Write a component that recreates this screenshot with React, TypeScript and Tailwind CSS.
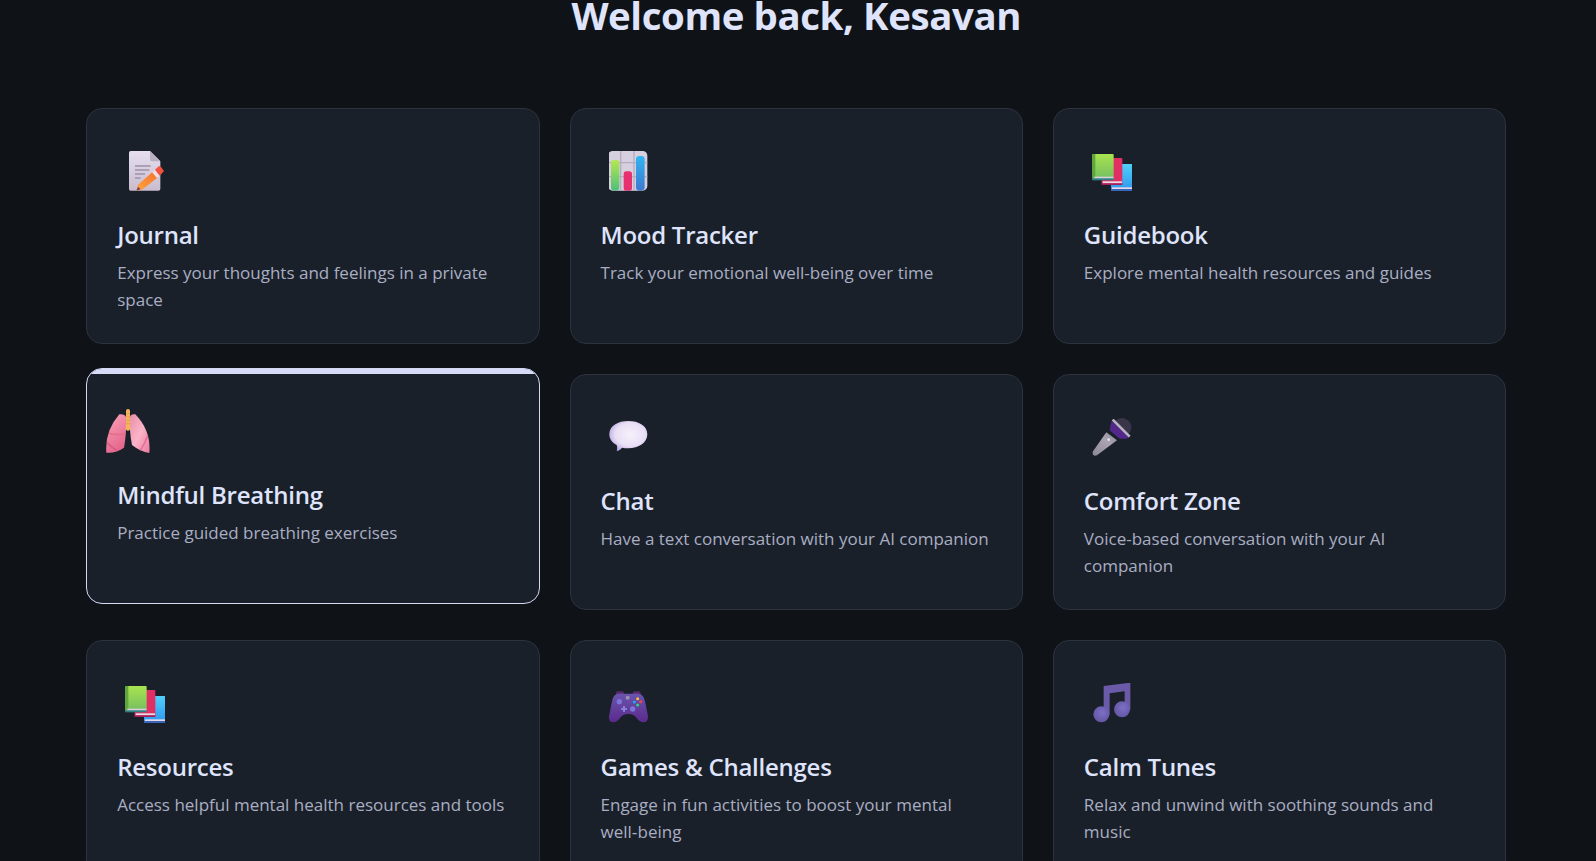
import type { ReactNode } from "react";

const JournalIcon = () => (
  <svg viewBox="75 33 120 120" className="h-10 w-10">
    <defs>
      <linearGradient id="docFill" x1="0" y1="0" x2="0" y2="1">
        <stop offset="0" stopColor="#e6dff0" />
        <stop offset="1" stopColor="#c9bccf" />
      </linearGradient>
      <linearGradient id="pencilFill" x1="0" y1="1" x2="1" y2="0">
        <stop offset="0" stopColor="#ffa63d" />
        <stop offset="1" stopColor="#f5702e" />
      </linearGradient>
    </defs>
    <path d="M92 33 H150 L181 64 V146 Q181 152 175 152 H92 Q87 152 87 146 V39 Q87 33 92 33 Z" fill="url(#docFill)" />
    <path d="M150 33 L181 64 H156 Q150 64 150 58 Z" fill="#b9b1c2" />
    <path d="M105 78 H152 M105 90 H148 M105 102 H135 M105 114 H122" stroke="#9a93a6" strokeWidth="4" />
    <path d="M109 152 L114 134 L160 94 L174 112 L128 148 Z" fill="url(#pencilFill)" />
    <path d="M109 152 L114 140 L122 148 Z" fill="#7b3f5a" />
    <path d="M156 97 L165 89 L179 107 L171 114 Z" fill="#ecdfe6" />
    <path d="M165 89 L176 79 Q180 78 183 81 L192 93 L179 107 Z" fill="#f4523f" />
  </svg>
);

const ChartIcon = () => (
  <svg viewBox="57 33 120 120" className="h-10 w-10">
    <defs>
      <linearGradient id="greenBar" x1="0" y1="0" x2="0" y2="1">
        <stop offset="0" stopColor="#b4e84f" />
        <stop offset="1" stopColor="#4fbf7a" />
      </linearGradient>
      <linearGradient id="blueBar" x1="0" y1="0" x2="0" y2="1">
        <stop offset="0" stopColor="#30b5f2" />
        <stop offset="1" stopColor="#3d78cf" />
      </linearGradient>
    </defs>
    <rect x="54" y="33" width="118" height="119" rx="14" fill="#d6cfdf" />
    <path d="M92 33 V152 M132 33 V152 M54 68 H172 M54 110 H172" stroke="#b3adbc" strokeWidth="4" />
    <rect x="63" y="60" width="25" height="92" rx="10" fill="url(#greenBar)" />
    <rect x="101" y="94" width="25" height="58" rx="8" fill="#e6306f" />
    <rect x="138" y="48" width="26" height="104" rx="10" fill="url(#blueBar)" />
  </svg>
);

const BooksIcon = () => (
  <svg viewBox="65 33 120 120" className="h-10 w-10">
    <defs>
      <linearGradient id="bookBlue" x1="0" y1="0" x2="0" y2="1">
        <stop offset="0" stopColor="#4fd0fa" />
        <stop offset="1" stopColor="#2f97ee" />
      </linearGradient>
      <linearGradient id="bookGreen" x1="0" y1="0" x2="0" y2="1">
        <stop offset="0" stopColor="#a9e34f" />
        <stop offset="1" stopColor="#72bd62" />
      </linearGradient>
    </defs>
    <rect x="122" y="72" width="64" height="80" rx="3" fill="url(#bookBlue)" />
    <rect x="125" y="142" width="60" height="5" fill="#e6d8e6" />
    <rect x="122" y="147" width="64" height="5" fill="#3b62b8" />
    <rect x="94" y="54" width="62" height="80" rx="3" fill="#e22f63" />
    <rect x="97" y="124" width="58" height="6" fill="#ecdbe3" />
    <rect x="94" y="130" width="62" height="5" fill="#a21f5a" />
    <rect x="66" y="42" width="64" height="78" rx="3" fill="url(#bookGreen)" />
    <rect x="66" y="42" width="9" height="72" fill="#5ea83d" />
    <rect x="72" y="110" width="57" height="6" fill="#d8cfe0" />
    <rect x="66" y="115" width="64" height="6" fill="#2f7f86" />
  </svg>
);

const LungsIcon = () => (
  <svg viewBox="32 24 132 132" className="h-10 w-10">
    <defs>
      <linearGradient id="lungLeft" x1="0" y1="0" x2="0.4" y2="1">
        <stop offset="0" stopColor="#f9a4b8" />
        <stop offset="1" stopColor="#e6688f" />
      </linearGradient>
      <linearGradient id="lungRight" x1="0" y1="0" x2="1" y2="1">
        <stop offset="0" stopColor="#e88fa5" />
        <stop offset="0.5" stopColor="#fbb4c8" />
        <stop offset="1" stopColor="#ee7aa0" />
      </linearGradient>
    </defs>
    <path d="M72 40 Q88 38 92 48 L92 88 Q90 120 86 140 Q60 158 33 155 Q28 90 72 40 Z" fill="url(#lungLeft)" />
    <path d="M120 40 Q106 38 104 48 L104 88 Q106 115 110 132 Q135 152 162 156 Q168 90 120 40 Z" fill="url(#lungRight)" />
    <path d="M42 97 Q65 104 90 98" stroke="#e66f89" strokeWidth="6" fill="none" />
    <path d="M35 125 Q50 140 66 150" stroke="#d85c85" strokeWidth="5" fill="none" />
    <path d="M157 104 Q150 125 135 148" stroke="#e66f95" strokeWidth="5" fill="none" />
    <path d="M92 30 Q92 24 98 24 Q104 24 104 30 V78 L106 85 L98 90 L90 85 L92 78 Z" fill="#f5b35c" />
    <path d="M92 38 H104 M92 48 H104 M92 58 H104 M92 68 H104" stroke="#d9993f" strokeWidth="2" />
  </svg>
);

const ChatIcon = () => (
  <svg viewBox="57 36 120 120" className="h-10 w-10">
    <defs>
      <radialGradient id="bubble" cx="0.55" cy="0.45" r="0.6">
        <stop offset="0" stopColor="#f6f1fb" />
        <stop offset="0.65" stopColor="#e9dff5" />
        <stop offset="1" stopColor="#b8a6e2" />
      </radialGradient>
    </defs>
    <path d="M58 88 C58 62 84 48 115 48 C146 48 172 62 172 88 C172 114 146 130 115 130 C108 130 102 129 96 128 C92 133 86 137 80 138 C82 132 82 126 80 120 C66 113 58 102 58 88 Z" fill="url(#bubble)" />
  </svg>
);

const MicIcon = () => (
  <svg viewBox="65 36 120 120" className="h-10 w-10">
    <defs>
      <linearGradient id="micHandle" x1="0" y1="1" x2="1" y2="0">
        <stop offset="0" stopColor="#8e8896" />
        <stop offset="0.6" stopColor="#aaa4b2" />
        <stop offset="1" stopColor="#8f8998" />
      </linearGradient>
    </defs>
    <path d="M67 140 L108 82 L140 106 L80 151 Q70 155 67 147 Z" fill="url(#micHandle)" />
    <circle cx="115" cy="104" r="4" fill="#e8e4ee" />
    <circle cx="155" cy="67" r="28" fill="#3a3548" />
    <path d="M124 48 L176 98 Q160 104 146 100 L118 76 Q120 60 124 48 Z" fill="#53288a" />
    <path d="M127 44 L178 95" stroke="#b9b4c4" strokeWidth="8" />
  </svg>
);

const GamepadIcon = () => (
  <svg viewBox="57 40 120 120" className="h-10 w-10">
    <defs>
      <linearGradient id="padBody" x1="0" y1="0" x2="0" y2="1">
        <stop offset="0" stopColor="#6a55ad" />
        <stop offset="1" stopColor="#5b2a8c" />
      </linearGradient>
    </defs>
    <rect x="78" y="65" width="24" height="12" rx="6" fill="#5a2a6e" />
    <rect x="128" y="65" width="24" height="12" rx="6" fill="#5a2a6e" />
    <path d="M85 72 H145 Q160 72 165 95 L174 140 Q175 158 160 158 Q150 158 140 145 Q132 133 115 133 Q98 133 90 145 Q80 158 70 158 Q56 158 57 140 L66 95 Q70 72 85 72 Z" fill="url(#padBody)" />
    <circle cx="88" cy="96" r="8" fill="#7c76d8" />
    <circle cx="128" cy="118" r="8" fill="#7c76d8" />
    <circle cx="113" cy="84" r="6" fill="#9b90b2" />
    <path d="M102 109 V127 M93 118 H111" stroke="#8c8ce8" strokeWidth="5" />
    <circle cx="143" cy="87" r="4.5" fill="#f5c33b" />
    <circle cx="152" cy="96" r="4.5" fill="#f4473f" />
    <circle cx="133" cy="97" r="4.5" fill="#2aa7f5" />
    <circle cx="143" cy="106" r="4.5" fill="#2fd67a" />
  </svg>
);

const MusicIcon = () => (
  <svg viewBox="65 40 120 120" className="h-10 w-10">
    <defs>
      <radialGradient id="noteHead" cx="0.55" cy="0.4" r="0.7">
        <stop offset="0" stopColor="#7d6fc4" />
        <stop offset="1" stopColor="#5f52a0" />
      </radialGradient>
    </defs>
    <path d="M100 49 L180 39 V120 H163 V65 L118 71 V135 H100 Z" fill="#6a5aa8" />
    <circle cx="93" cy="134" r="24" fill="url(#noteHead)" />
    <circle cx="155" cy="119" r="24" fill="url(#noteHead)" />
  </svg>
);

type CardProps = {
  icon: ReactNode;
  title: string;
  text: string;
  hovered?: boolean;
};

const Card = ({ icon, title, text, hovered }: CardProps) => {
  return (
    <div
      className={
        hovered
          ? "relative -translate-y-1.5 overflow-hidden rounded-2xl border border-[#d3d7f2] bg-[#1a202a] p-[30px]"
          : "relative rounded-2xl border border-[#2c323e] bg-[#1a202a] p-[30px]"
      }
    >
      {hovered && <div className="absolute inset-x-0 top-0 h-[5px] bg-[#d7dbf7]" />}
      <div className="mb-4 flex h-16 items-center pl-2">
        <div className={hovered ? "-translate-x-[17px] scale-110" : ""}>{icon}</div>
      </div>
      <h3 className="mb-2 text-[24px] leading-8 font-semibold tracking-[-0.25px] text-[#dfe4fb]">{title}</h3>
      <p className="text-[17px] leading-[27px] text-[#a9aec2]">{text}</p>
    </div>
  );
};

const cards: CardProps[] = [
  { icon: <JournalIcon />, title: "Journal", text: "Express your thoughts and feelings in a private space" },
  { icon: <ChartIcon />, title: "Mood Tracker", text: "Track your emotional well-being over time" },
  { icon: <BooksIcon />, title: "Guidebook", text: "Explore mental health resources and guides" },
  { icon: <LungsIcon />, title: "Mindful Breathing", text: "Practice guided breathing exercises", hovered: true },
  { icon: <ChatIcon />, title: "Chat", text: "Have a text conversation with your AI companion" },
  { icon: <MicIcon />, title: "Comfort Zone", text: "Voice-based conversation with your AI companion" },
  { icon: <BooksIcon />, title: "Resources", text: "Access helpful mental health resources and tools" },
  { icon: <GamepadIcon />, title: "Games & Challenges", text: "Engage in fun activities to boost your mental well\u2011being" },
  { icon: <MusicIcon />, title: "Calm Tunes", text: "Relax and unwind with soothing sounds and music" },
];

export default function App() {
  return (
    <div className="h-[861px] overflow-hidden bg-[#0f1318] font-['Open_Sans',sans-serif]">
      <div className="w-[1592.4px] px-[86.2px]">
        <h1 className="-mt-[15px] mb-[63px] text-center text-[38.4px] leading-[60px] font-bold tracking-[-0.4px] text-[#dfe4fb]">
          Welcome back, Kesavan
        </h1>
        <div className="grid grid-cols-3 gap-[30px]">
          {cards.map((card) => (
            <Card key={card.title} {...card} />
          ))}
        </div>
      </div>
    </div>
  );
}
